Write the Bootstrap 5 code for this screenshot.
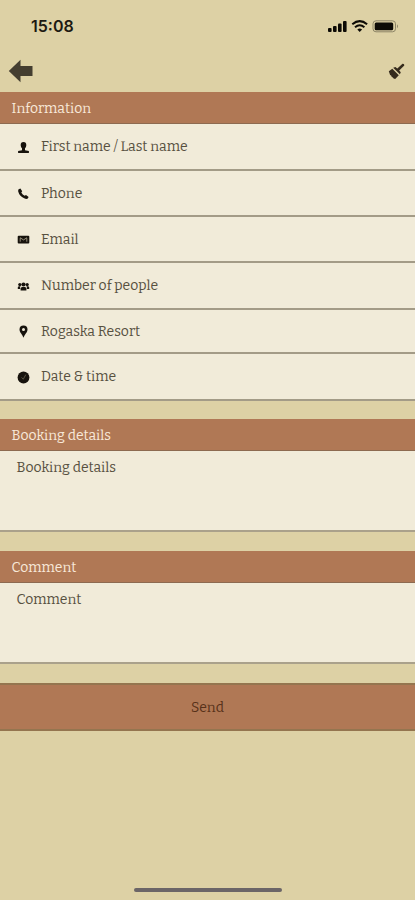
<!DOCTYPE html>
<html lang="en">
<head>
<meta charset="utf-8">
<meta name="viewport" content="width=device-width, initial-scale=1">
<title>Booking</title>
<link href="https://cdn.jsdelivr.net/npm/bootstrap@5.3.0/dist/css/bootstrap.min.css" rel="stylesheet">
<style>
  body { background: #ddd1a5; font-family: Bitter, "DejaVu Serif Condensed", "DejaVu Serif", serif; font-size: 13.95px; line-height: 20px; color: #57503f; }
  .screen { height: 900px; }
  .status-strip { height: 50px; padding: 1px 16px 0 31px; font-family: Inter, sans-serif; font-size: 16px; font-weight: 600; color: #1d1a12; }
  .tool-strip { height: 42px; padding: 0 10px 0 8px; }
  .section-title { height: 32px; padding: 2px 11.6px 0; background: #b07855; color: #f8e9da; border-bottom: 1px solid #8d6a50; font-size: 13.95px; line-height: 20px; }
  .form-rows { --bs-list-group-bg: #f1ebd9; --bs-list-group-color: #57503f; --bs-list-group-border-color: #a39a85; --bs-list-group-item-padding-x: 17px; --bs-list-group-item-padding-y: 0; }
  .form-rows .list-group-item { height: 46px; gap: 11px; padding-top: 1px; border-bottom: 2px solid #a39b87 !important; }
  .form-rows .list-group-item.tall { height: 47px; }
  .form-rows .list-group-item.short { height: 44px; }
  .form-rows svg { width: 13px; height: 13px; fill: #17130d; }
  .note-box { height: 81px; padding: 7px 16.6px; background: #f1ebd9; border-bottom: 2px solid #aaa18b; }
  .block { margin-top: 19px; }
  .rows-gap { margin-top: 18px; }
  .send { height: 48px; margin-top: 19px; padding-top: 8px; --bs-btn-bg: #b07855; --bs-btn-color: #573119; --bs-btn-hover-bg: #a46d4b; --bs-btn-font-size: 13.95px; border: 0; border-top: 2px solid #94754f; border-bottom: 2px solid #94754f; }
  .home-bar { width: 148px; height: 4px; background: #6b6567; margin-bottom: 8px; }
</style>
</head>
<body>
<main class="screen d-flex flex-column">
  <header>
    <div class="status-strip d-flex align-items-center justify-content-between">
      <span>15:08</span>
      <svg width="71" height="14" viewBox="0 0 71 14" fill="#0d0b06">
        <rect x="0" y="9" width="3.6" height="4" rx="1"/><rect x="5" y="7" width="3.6" height="6" rx="1"/><rect x="10" y="4.500" width="3.6" height="8.500" rx="1"/><rect x="15" y="2" width="3.600" height="11" rx="1"/>
        <g fill="none" stroke="#0d0b06" stroke-width="2"><path d="M24.300 5.300q7.400-6.400 14.800 0"/><path d="M27 8.300q4.700-4 9.400 0"/></g><path d="M29.300 10.600q2.400-2 4.800 0l-2.400 2.500z"/>
        <rect x="45" y="1.800" width="22.500" height="11" rx="3" fill="none" stroke="#8d8567" stroke-width="1"/><rect x="46.700" y="3.500" width="18.500" height="7.700" rx="1.500"/><path d="M69 5.300q2 2 0 4z" fill="#8d8567"/>
      </svg>
    </div>
    <div class="tool-strip d-flex align-items-center justify-content-between">
      <svg width="25" height="24" viewBox="0 0 25 24" fill="#443e30"><path d="M.8 12 12.500.7V7H24.500v10h-12v6.300z"/></svg>
      <svg width="17" height="17" viewBox="0 0 17 17" fill="#352b1d"><path d="M.8 8.300 4.300 5.700 10.800 12.200 7.200 16 5.600 15.500 4.900 14.400 3.800 14 3.100 12.600 2.100 12z"/><path d="M5.200 4.700 7.400 4 9.300 5.500 14.500.8q2-.3 1.800 1.800L11.200 7.500l1.600 1.800-.9 2z"/></svg>
    </div>
  </header>

  <section>
    <h2 class="section-title d-flex align-items-center m-0 fw-normal">Information</h2>
    <div class="form-rows list-group list-group-flush">
      <div class="list-group-item d-flex align-items-center tall"><svg viewBox="0 0 13 13"><path d="M6.500 1c2 0 2.800 1.200 2.800 3 0 1.700-.6 2.500-1.300 3.300v1.900l3.900.8v2H1.100v-2L5 9.200V7.300C4.300 6.500 3.700 5.700 3.700 4c0-1.800.8-3 2.800-3z"/></svg><span>First name / Last name</span></div>
      <div class="list-group-item d-flex align-items-center"><svg viewBox="0 0 13 13"><path d="M1.600 2.300 3.400 1.500 5.200 4.300 4.300 5.500q1.200 2.300 3.400 3.300l1.300-.8 2.600 1.900-.8 1.700q-1.500.7-3.600-.3-4.900-2.400-6-6.800-.2-1.500.4-2.200z"/></svg><span>Phone</span></div>
      <div class="list-group-item d-flex align-items-center"><svg viewBox="0 0 13 13"><rect x=".7" y="2.700" width="11.600" height="7.800" rx="1"/><path d="M3 4.700 6.500 6.900 10 4.700M3.200 8.700V5.200m6.600 3.500V5.200" fill="none" stroke="#b5ac96" stroke-width=".8"/></svg><span>Email</span></div>
      <div class="list-group-item d-flex align-items-center tall"><svg viewBox="0 0 13 13"><circle cx="6.500" cy="4.500" r="2.100"/><circle cx="2.800" cy="4.600" r="1.600"/><circle cx="10.200" cy="4.600" r="1.600"/><path d="M3.600 10.500V8.700q0-1.800 1.700-1.800h2.400q1.700 0 1.700 1.800v1.800zM.8 9V7.300q.2-1 1.400-1h1.300Q2.900 7.500 3.200 9zM12.200 9V7.300q-.2-1-1.400-1H9.500q.6 1.200.3 2.700z"/></svg><span>Number of people</span></div>
      <div class="list-group-item d-flex align-items-center short"><svg viewBox="0 0 13 13"><path fill-rule="evenodd" d="M6.500.4a4 4 0 0 1 4 4C10.500 7.300 7.800 8.800 6.500 12.800 5.200 8.800 2.500 7.300 2.500 4.400a4 4 0 0 1 4-4zm0 2.500a1.500 1.500 0 1 0 0 3 1.500 1.500 0 0 0 0-3z"/></svg><span>Rogaska Resort</span></div>
      <div class="list-group-item d-flex align-items-center tall"><svg viewBox="0 0 13 13"><circle cx="6.500" cy="6.500" r="5.900"/><path d="M4.500 6.500 6.300 8.200 8.800 3.600" fill="none" stroke="#6b6452" stroke-width=".8"/></svg><span>Date &amp; time</span></div>
    </div>
  </section>

  <section class="rows-gap">
    <h2 class="section-title d-flex align-items-center m-0 fw-normal">Booking details</h2>
    <div class="note-box">Booking details</div>
  </section>

  <section class="block">
    <h2 class="section-title d-flex align-items-center m-0 fw-normal">Comment</h2>
    <div class="note-box">Comment</div>
  </section>

  <button type="button" class="btn send w-100 rounded-0">Send</button>
  <div class="home-bar rounded-pill mt-auto mx-auto"></div>
</main>
<script src="https://cdn.jsdelivr.net/npm/bootstrap@5.3.0/dist/js/bootstrap.bundle.min.js"></script>
</body>
</html>
